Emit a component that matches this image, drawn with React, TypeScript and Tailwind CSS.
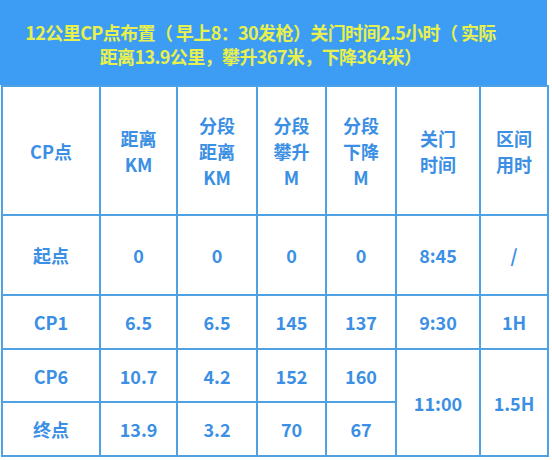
const font = { fontFamily: '"Noto Sans CJK SC", "Noto Sans", sans-serif' };

type Cell = { text: string; rowSpan?: number };

const head = [
  ['CP点'],
  ['距离', 'KM'],
  ['分段', '距离', 'KM'],
  ['分段', '攀升', 'M'],
  ['分段', '下降', 'M'],
  ['关门', '时间'],
  ['区间', '用时'],
];

const rows: { h: string; cells: Cell[] }[] = [
  {
    h: 'h-[80px]',
    cells: [{ text: '起点' }, { text: '0' }, { text: '0' }, { text: '0' }, { text: '0' }, { text: '8:45' }, { text: '/' }],
  },
  {
    h: 'h-[54px]',
    cells: [{ text: 'CP1' }, { text: '6.5' }, { text: '6.5' }, { text: '145' }, { text: '137' }, { text: '9:30' }, { text: '1H' }],
  },
  {
    h: 'h-[53px]',
    cells: [
      { text: 'CP6' },
      { text: '10.7' },
      { text: '4.2' },
      { text: '152' },
      { text: '160' },
      { text: '11:00', rowSpan: 2 },
      { text: '1.5H', rowSpan: 2 },
    ],
  },
  {
    h: 'h-[54px]',
    cells: [{ text: '终点' }, { text: '13.9' }, { text: '3.2' }, { text: '70' }, { text: '67' }],
  },
];

const widths = ['w-[98px]', 'w-[77px]', 'w-[80px]', 'w-[69px]', 'w-[70px]', 'w-[84px]', 'w-[68px]'];

export default function App() {
  return (
    <div className="w-[552px] h-[460px] bg-white overflow-hidden" style={font}>
      <div className="w-[547px] h-[85px] bg-[#3d9df4] flex flex-col items-center justify-center pt-[2px] pr-[26px] text-[#e7f04c] font-bold text-[18px] leading-[24px] tracking-[-0.6px]">
        <div>12公里CP点布置（ 早上8：30发枪）关门时间2.5小时（ 实际</div>
        <div>距离13.9公里，攀升367米，下降364米）</div>
      </div>
      <div className="pl-[1px]">
        <table className="w-[548px] table-fixed border-collapse text-[#3b8fe4] font-bold text-[18px]">
          <colgroup>
            {widths.map((w, i) => (
              <col key={i} className={w} />
            ))}
          </colgroup>
          <tbody>
            <tr className="h-[129px]">
              {head.map((lines, i) => (
                <td key={i} className="border-2 border-[#4ea2e4] text-center align-middle p-0 leading-[26px]">
                  {lines.map((l, j) => (
                    <div key={j}>{l}</div>
                  ))}
                </td>
              ))}
            </tr>
            {rows.map((r, i) => (
              <tr key={i} className={r.h}>
                {r.cells.map((c, j) => (
                  <td
                    key={j}
                    rowSpan={c.rowSpan}
                    className="border-2 border-[#4ea2e4] text-center align-middle p-0 leading-[22px]"
                  >
                    {c.text}
                  </td>
                ))}
              </tr>
            ))}
          </tbody>
        </table>
      </div>
    </div>
  );
}
